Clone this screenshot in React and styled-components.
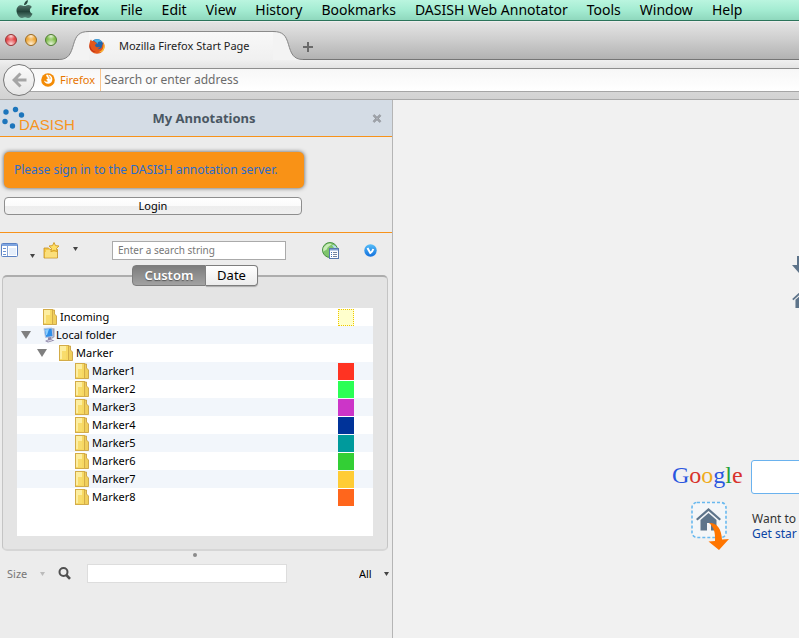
import React from "react";
import styled, { createGlobalStyle, css } from "styled-components";

const Global = createGlobalStyle`
  * { box-sizing: border-box; }
  body { margin: 0; background: #ececec; overflow: hidden; }
  body, button, input, select {
    font-family: "Noto Sans", "Open Sans", sans-serif;
    font-size: 11px;
    color: #000;
  }
  button, input, select { margin: 0; padding: 0; border: 0; background: none; }
  svg { display: block; flex: none; }
`;

const Window = styled.div`
  display: flex;
  flex-direction: column;
  height: 100vh;
`;

/* ---------- system menu ---------- */
const MenuBar = styled.nav`
  flex: none;
  display: flex;
  align-items: center;
  height: 21px;
  padding-left: 16px;
  background: linear-gradient(#baf5df, #a4ecd2 50%, #8fd8bd);
  border-bottom: 1px solid #2c745b;
`;
const MenuItem = styled.button`
  flex: none;
  margin-left: ${(p) => (p.$strong ? 18 : 19)}px;
  margin-right: ${(p) => (p.$strong ? 2 : 0)}px;
  font-size: 14px;
  line-height: 20px;
  font-weight: ${(p) => (p.$strong ? 700 : 400)};
  white-space: nowrap;
`;

/* ---------- tab strip ---------- */
const TabStrip = styled.div`
  flex: none;
  display: flex;
  align-items: flex-end;
  height: 39px;
  background: linear-gradient(#e4e4e4, #cfcfcf 45%, #b2b2b2);
  border-top: 1px solid #eee;
  border-bottom: 1px solid #757575;
`;
const Lights = styled.div`
  display: flex;
  gap: 8px;
  align-self: flex-start;
  padding: 12px 2px 0 5px;
`;
const Light = styled.button`
  width: 12px;
  height: 12px;
  border-radius: 50%;
  border: 1px solid ${(p) => p.$edge};
  background: radial-gradient(circle at 50% 90%, #ffffffcc, transparent 55%),
    radial-gradient(circle at 50% 10%, #fffc, transparent 40%), ${(p) => p.$fill};
`;
const Tab = styled.div`
  display: flex;
  margin-bottom: -1px;
  height: 29px;
`;
const TabFace = styled.div`
  display: flex;
  align-items: center;
  gap: 14px;
  width: 184px;
  padding-bottom: 1px;
  background: linear-gradient(#f8f8f8, #f0f0f0);
  border-top: 1px solid #8b8b8b;
  white-space: nowrap;
  color: #222;
`;
const NewTab = styled.button`
  padding: 0 3px 7px 0;
`;

/* ---------- address bar ---------- */
const NavBar = styled.div`
  flex: none;
  display: flex;
  align-items: center;
  height: 40px;
  padding-left: 3px;
  background: linear-gradient(#f0f0f0, #e4e4e4 20%, #d2d2d2);
  border-bottom: 1px solid #a9a9a9;
`;
const Back = styled.button`
  flex: none;
  display: flex;
  align-items: center;
  justify-content: center;
  width: 32px;
  height: 32px;
  border-radius: 50%;
  border: 1px solid #777;
  background: linear-gradient(#fbfbfb, #e6e6e6);
  z-index: 1;
`;
const UrlBar = styled.label`
  flex: 1;
  display: flex;
  align-items: center;
  height: 24px;
  margin-left: -5px;
  padding-left: 11px;
  background: linear-gradient(#f7f7f7, #fff);
  border-top: 1px solid #8e8e8e;
  border-bottom: 1px solid #a5a5a5;
`;
const Identity = styled.span`
  padding: 0 5px 0 5px;
  border-right: 1px solid #f9c48c;
  line-height: 22px;
  color: #e77600;
`;
const UrlInput = styled.input`
  flex: 1;
  min-width: 0;
  padding-left: 3px;
  font-size: 12px;
  outline: none;
  &::placeholder { color: #6b6b6b; opacity: 1; }
`;

/* ---------- body ---------- */
const Body = styled.div`
  flex: 1;
  display: flex;
  min-height: 0;
`;
const Sidebar = styled.aside`
  flex: none;
  width: 393px;
  background: #ececec;
  border-right: 1px solid #b5b5b5;
`;
const Header = styled.header`
  display: flex;
  align-items: center;
  height: 37px;
  padding-right: 10px;
  background: #d4dce5;
  border-bottom: 1px solid #f7921a;
`;
const Title = styled.h1`
  flex: 1;
  margin: 0;
  padding-right: 42px;
  text-align: center;
  font-size: 13px;
  font-weight: 700;
  color: #4a5763;
`;
const SignIn = styled.section`
  padding: 15px 4px 17px;
  border-bottom: 1px solid #f7921a;
`;
const Notice = styled.p`
  width: 300px;
  margin: 0 0 9px;
  padding: 9px 10px;
  border-radius: 5px;
  background: #f99216;
  box-shadow: 0 0 4px #555;
  font-size: 12px;
  line-height: 18px;
  white-space: nowrap;
  color: #2a6ccc;
`;
const Login = styled.button`
  display: block;
  width: 298px;
  height: 18px;
  border: 1px solid #8e8e8e;
  border-radius: 4px;
  background: linear-gradient(#fff, #fbfbfb 50%, #ededed 50%, #f0f0f0);
  line-height: 16px;
`;
const Tools = styled.div`
  display: flex;
  align-items: center;
  height: 32px;
  padding: 2px 0 0 1px;
`;
const Tool = styled.button`
  display: flex;
  align-items: center;
  margin-left: ${(p) => p.$before || 0}px;
`;
const Low = styled.span`
  align-self: flex-end;
  padding-left: 12px;
  margin-bottom: -1px;
`;
const High = styled.span`
  padding: 0 0 3px 13px;
`;
const Field = styled.input`
  width: ${(p) => p.$w}px;
  height: 19px;
  margin-left: ${(p) => p.$before || 0}px;
  padding: 0 5px;
  border: 1px solid ${(p) => p.$line};
  background: #fff;
  font-size: 10px;
  &::placeholder { color: #777; opacity: 1; }
`;
const Group = styled.section`
  margin: 0 4px 0 2px;
`;
const Frame = styled.div`
  margin-top: -11px;
  padding: 31px 14px 13px;
  border: 1px solid #c4c4c4;
  border-top: 2px solid #adadad;
  border-bottom: 2px solid #d6d6d6;
  border-radius: 5px;
  background: #e4e4e4;
`;
const Tabs = styled.div`
  position: relative;
  z-index: 1;
  display: flex;
  justify-content: center;
`;
const Segment = styled.button`
  height: 21px;
  font-size: 13px;
  line-height: 19px;
  border: 1px solid #7d7d7d;
  ${(p) =>
    p.$on
      ? css`
          width: 74px;
          border-radius: 4px 0 0 4px;
          background: linear-gradient(#7c7c7c, #a2a2a2);
          color: #fff;
          font-weight: 600;
          text-shadow: 0 1px 1px #555;
        `
      : css`
          width: 52px;
          border-left: 0;
          border-radius: 0 4px 4px 0;
          background: linear-gradient(#fff, #ececec);
          box-shadow: 0 1px 1px #aaa;
        `}
`;
const Tree = styled.ul`
  height: 228px;
  margin: 0;
  padding: 0;
  list-style: none;
  background: #fff;
`;
const Row = styled.li`
  display: flex;
  align-items: center;
  height: 18px;
  padding: 0 19px 0 ${(p) => 3 + p.$level * 16}px;
  line-height: 18px;
  &:nth-child(even) { background: #f2f6fb; }
`;
const Twisty = styled.button`
  width: 23px;
  height: 18px;
  padding-left: 1px;
`;
const TwistySpace = styled.span`
  width: 23px;
`;
const Name = styled.span`
  flex: 1;
  padding-left: ${(p) => (p.$tight ? 0 : 3)}px;
`;
const Swatch = styled.span`
  align-self: flex-end;
  width: 16px;
  height: 17px;
  background: ${(p) => p.$fill};
  border: ${(p) => (p.$dotted ? "1px dotted #eec800" : "0")};
`;
const Splitter = styled.div`
  display: flex;
  justify-content: center;
  padding: 2px 2px 0 0;
`;
const Knob = styled.span`
  width: 4px;
  height: 4px;
  border-radius: 50%;
  background: #8b8b8b;
`;
const Filter = styled.div`
  display: flex;
  align-items: center;
  height: 19px;
  margin-top: 7px;
  padding: 0 3px 0 7px;
`;
const Drop = styled.label`
  display: flex;
  align-items: center;
  gap: 12px;
  margin-left: ${(p) => (p.$end ? "auto" : 0)};
`;
const Select = styled.select`
  appearance: none;
  line-height: 18px;
  &:disabled { color: #777; opacity: 1; }
`;
const Search = styled.button`
  margin: 0 16px 0 13px;
`;

/* ---------- start page ---------- */
const StartPage = styled.main`
  flex: 1;
  min-width: 0;
  padding: 156px 0 0 279px;
  background: #f1f1f1;
  overflow: hidden;
`;
const Shortcuts = styled.div`
  display: flex;
  flex-direction: column;
  gap: 16px;
  padding-left: 120px;
`;
const SearchRow = styled.div`
  display: flex;
  align-items: center;
  gap: 8px;
  margin-top: 152px;
`;
const Google = styled.span`
  flex: none;
  width: 71px;
  padding-bottom: 4px;
  font-family: "Liberation Serif", serif;
  font-size: 24px;
  line-height: 30px;
`;
const Letter = styled.span`
  color: ${(p) => p.$c};
`;
const GoogleInput = styled.input`
  flex: none;
  width: 300px;
  height: 34px;
  border: 1px solid #6ab2ee;
  border-radius: 3px;
  background: #fff;
`;
const Tip = styled.div`
  display: flex;
  gap: 21px;
  margin-top: 6px;
  padding-left: 18px;
`;
const TipText = styled.div`
  display: flex;
  flex-direction: column;
  padding-top: 11px;
  font-size: 12px;
  line-height: 15px;
  white-space: nowrap;
  color: #333;
`;
const TipLink = styled.a`
  color: #0b45a5;
  text-decoration: none;
`;

/* ---------- drawings ---------- */
const Arrow = ({ c = "#444", w = 5, h = 4 }) => (
  <svg width={w} height={h} viewBox="0 0 10 8">
    <path d="M0 0H10L5 8Z" fill={c} />
  </svg>
);

const Apple = () => (
  <svg width="17" height="20" viewBox="0 0 17 20">
    <defs>
      <linearGradient id="ap" x1="0" y1="0" x2="0" y2="1">
        <stop offset="0" stopColor="#55776c" />
        <stop offset=".5" stopColor="#23443a" />
        <stop offset="1" stopColor="#5a8879" />
      </linearGradient>
    </defs>
    <path d="M8 5.2C8 2.7 9.600.7 11.900 0C12.200 2.600 10.500 4.900 8 5.200Z" fill="#2c4b41" />
    <path d="M8.600 6.100C9.700 6.100 10.600 5 12.300 5C13.900 5 15.200 5.800 15.900 6.900C12.900 8.700 13.300 12.400 16.500 13.700C15.700 15.900 14.100 18 12.500 18C11.200 18 10.600 17.200 9 17.200C7.400 17.200 6.700 18 5.500 18C3 18 .5 13.900.5 10.500C.5 7.200 2.600 5.200 5 5.200C6.600 5.200 7.600 6.100 8.600 6.100Z" fill="url(#ap)" />
  </svg>
);

const FirefoxLogo = () => (
  <svg width="16" height="16" viewBox="0 0 16 16">
    <circle cx="8" cy="7.500" r="6.500" fill="#2467ad" />
    <path d="M5 2.500C7 .5 11 1 13 4C10 2.500 8 4 9 6Z" fill="#4cb4e8" />
    <path d="M1 3.500C1.300 2.500 1.500 2 2 1.500L3 3.300C4.500 2.700 5.500 3.200 6.200 4.300L8 5C7.600 6 6.500 6.200 6 7C6 9 9 10 10.500 8.800C11 9.500 10 10.800 8.500 11C11.500 12 13.500 9.500 13.200 6L14 7C14.200 5.500 13.800 4 13 3C15 4.500 15.800 6.500 15.500 9C15 13 12 15.700 8 15.700C4 15.700.5 12.800.3 8.500C.2 6.500.5 5 1 3.500Z" fill="#e4571b" />
    <path d="M14 4.800C15.300 8.500 14 13 9.500 14.300C13 14.800 15.600 12 15.600 8.500C15.500 7 15 5.700 14 4.800Z" fill="#fcc234" />
    <path d="M1 6C1 10 3 13 7 14C3 14.500.2 11 .5 8Z" fill="#b92d1a" />
  </svg>
);

const FirefoxMark = () => (
  <svg width="14" height="14" viewBox="0 0 14 14">
    <circle cx="7" cy="7" r="6.800" fill="#f38b05" />
    <path d="M5 2C7 1.500 10 2 11 4.500C12 7.500 10.500 10.500 7.500 10.800C5 11 3.200 9.500 3 7.500C4.200 8.800 6 9 7.200 8C5.800 7.800 5.200 6.800 5.600 6L7.400 5.200L6 4.200Z" fill="#fff" />
    <path d="M7 2.500C8.500 3.200 9.300 4.500 9 6.200" stroke="#f38b05" fill="none" strokeWidth=".8" />
  </svg>
);

const TabEnd = ({ flip }) => (
  <svg width="30" height="29" viewBox="0 0 30 29">
    <g transform={flip ? "translate(30 0) scale(-1 1)" : undefined}>
      <path d="M0 28.500C10 28.500 12 22 14.500 13.500C17 4.500 20 .5 30 .5V29H0Z" fill="#f3f3f3" />
      <path d="M0 28.500C10 28.500 12 22 14.500 13.500C17 4.500 20 .5 30 .5" fill="none" stroke="#858585" />
    </g>
  </svg>
);

const DasishLogo = () => (
  <svg width="78" height="28" viewBox="0 0 78 28">
    <g fill="#1c75bc">
      <circle cx="6" cy="8" r="2.700" />
      <circle cx="15.500" cy="5.500" r="2.700" />
      <circle cx="21.500" cy="11" r="2.700" />
      <circle cx="5" cy="17.500" r="2.700" />
      <circle cx="12.500" cy="22" r="2.700" />
    </g>
    <text x="19" y="26" fontFamily="Liberation Sans, sans-serif" fontSize="15" fill="#f7941d">DASISH</text>
  </svg>
);

const PanelIcon = () => (
  <svg width="17" height="14" viewBox="0 0 17 14">
    <rect x=".5" y=".5" width="16" height="13" rx="1" fill="#fff" stroke="#5b82c4" />
    <path d="M1 1H16V3H1Z" fill="#7fa5e0" />
    <path d="M6.500 3V13" stroke="#8aa7d6" />
    <path d="M2 5.500H5M2 8.500H5M2 11.500H5" stroke="#6c93d2" />
    <rect x="8" y="5" width="7" height="7" fill="#e6effb" />
  </svg>
);

const NewFolderIcon = () => (
  <svg width="17" height="17" viewBox="0 0 17 17">
    <path d="M1 6H5.500L7 7.500H14.500V16H1Z" fill="#f6c944" stroke="#c4912a" strokeWidth=".8" />
    <path d="M2 10H14V15.500H2Z" fill="#fbdf7c" />
    <path d="M3 9H9" stroke="#fff3b8" />
    <path d="M11 .5L12.500 3.600L16 4L13.500 6.400L14.200 9.700L11 8.100L7.900 9.700L8.500 6.400L6 4L9.500 3.600Z" fill="#ffdf66" stroke="#cf9a26" strokeWidth=".9" />
  </svg>
);

const GlobeIcon = () => (
  <svg width="17" height="17" viewBox="0 0 17 17">
    <circle cx="8" cy="8" r="7.500" fill="#7fc46c" stroke="#4a9244" />
    <path d="M2 5C5 1 8 1 10 2C8 4 6 4 5 7C4 9 2 8 1.500 10C1 8 1 6 2 5Z" fill="#c9ecb8" />
    <path d="M10 3C13 2.500 15 5 15 7L12 6Z" fill="#b3ddf0" />
    <rect x="7.500" y="6.500" width="9" height="10" fill="#fff" stroke="#5878ac" />
    <path d="M8 7H16V8.500H8Z" fill="#7f9fd0" />
    <path d="M11 10.500H15M11 12.500H15M11 14.500H15" stroke="#7585a0" />
    <path d="M9 10.500H10M9 12.500H10M9 14.500H10" stroke="#3d6db5" />
  </svg>
);

const CheckIcon = () => (
  <svg width="13" height="13" viewBox="0 0 13 13">
    <defs>
      <linearGradient id="ck" x1="0" y1="0" x2="0" y2="1">
        <stop offset="0" stopColor="#55bdf8" />
        <stop offset="1" stopColor="#1270dd" />
      </linearGradient>
    </defs>
    <circle cx="6.500" cy="6.500" r="6.200" fill="url(#ck)" />
    <path d="M3.500 4L6.300 9C7.500 8.500 8.800 6.500 9.300 5" fill="none" stroke="#fff" strokeWidth="2" />
  </svg>
);

const FolderIcon = () => (
  <svg width="14" height="16" viewBox="0 0 14 16">
    <path d="M9.500 1H11.500V5L13.500 7V15.500H9.500Z" fill="#f0cf5c" stroke="#c59a36" strokeWidth=".8" />
    <rect x=".5" y=".5" width="9" height="15" fill="#f7d964" stroke="#d3ac48" />
    <path d="M1 1H7V14H1Z" fill="#fdeea0" />
    <path d="M3 6H8V14.500H3Z" fill="#f6d75f" opacity=".8" />
  </svg>
);

const ComputerIcon = () => (
  <svg width="13" height="16" viewBox="0 0 13 16">
    <path d="M8 1L11.500 1.500V10L8.500 12Z" fill="#9aa1b8" />
    <path d="M1 1.500L9 1L10 9.500L2.500 10.500Z" fill="#2f8fe8" stroke="#b9c6e2" />
    <path d="M2 2.500L6 2L4 8L3 8Z" fill="#8fd0ff" />
    <path d="M5 10.500L8 10L8.500 12.500L11.500 13.500L5 15.500L2 14L5 12.500Z" fill="#8d86a8" />
    <path d="M4 13.500L8 12.800L9.500 13.600L5 14.800Z" fill="#d5d3e2" />
  </svg>
);

const House = () => (
  <svg width="20" height="18" viewBox="0 0 24 22">
    <path d="M0 11L12 0L24 11L22.500 12.500L12 3L1.500 12.500Z" fill="#5e748a" />
    <path d="M12 5L20 12V22H14.500V15H9.500V22H4V12Z" fill="#5e748a" />
  </svg>
);

const HomeDrag = () => (
  <svg width="41" height="50" viewBox="0 0 41 50">
    <rect x="2" y="2.500" width="34" height="35" rx="5" fill="#f4f6f8" stroke="#69b9ef" strokeWidth="1.600" strokeDasharray="3 2" />
    <g transform="translate(6 8)" fill="#5e748a">
      <path d="M0 11L12.500 0L25 11L23.500 12.500L12.500 3L1.500 12.500Z" />
      <path d="M12.500 5L20.500 12V22.500H15V15H11V22.500H4.500V12Z" />
    </g>
    <path d="M19 23C27 22.500 31.500 29 32 39.500L39 39L29 50L18.500 41.500L25 41C25.500 33 24 27 19 23Z" fill="#ff7500" />
  </svg>
);

const menu = ["File", "Edit", "View", "History", "Bookmarks", "DASISH Web Annotator", "Tools", "Window", "Help"];
const markers = ["#ff3322", "#2bff55", "#cc35c8", "#003399", "#009a9c", "#33cf35", "#ffcc35", "#ff661c"];
const rows = [
  { name: "Incoming", level: 0, fill: "#ffffcc", dotted: true },
  { name: "Local folder", level: 0, open: true, computer: true },
  { name: "Marker", level: 1, open: true },
  ...markers.map((fill, i) => ({ name: `Marker${i + 1}`, level: 2, fill })),
];

export default function App() {
  return (
    <Window>
      <Global />
      <MenuBar>
        <Apple />
        <MenuItem $strong>Firefox</MenuItem>
        {menu.map((m) => (
          <MenuItem key={m}>{m}</MenuItem>
        ))}
      </MenuBar>
      <TabStrip>
        <Lights>
          <Light aria-label="Close" $fill="#e5484a" $edge="#96393b" />
          <Light aria-label="Minimize" $fill="#f0a93a" $edge="#9a6c28" />
          <Light aria-label="Zoom" $fill="#83bf4e" $edge="#517d38" />
        </Lights>
        <Tab>
          <TabEnd />
          <TabFace>
            <FirefoxLogo />
            Mozilla Firefox Start Page
          </TabFace>
          <TabEnd flip />
        </Tab>
        <NewTab aria-label="New tab">
          <svg width="10" height="10" viewBox="0 0 10 10">
            <path d="M5 0V10M0 5H10" stroke="#6a6a6a" strokeWidth="2" />
          </svg>
        </NewTab>
      </TabStrip>
      <NavBar>
        <Back aria-label="Back">
          <svg width="15" height="16" viewBox="0 0 15 16">
            <path d="M8.500 1.500L2 8L8.500 14.500M2.500 8H14.500" fill="none" stroke="#a5a5a5" strokeWidth="3" />
          </svg>
        </Back>
        <UrlBar>
          <FirefoxMark />
          <Identity>Firefox</Identity>
          <UrlInput placeholder="Search or enter address" aria-label="Address" />
        </UrlBar>
      </NavBar>
      <Body>
        <Sidebar>
          <Header>
            <DasishLogo />
            <Title>My Annotations</Title>
            <button aria-label="Close sidebar">
              <svg width="10" height="9" viewBox="0 0 10 9">
                <path d="M1.500 1L8.500 8M8.500 1L1.500 8" stroke="#85898e" strokeWidth="2.400" />
                <path d="M1.500 1L8.500 8M8.500 1L1.500 8" stroke="#c3c8cf" strokeWidth=".8" />
              </svg>
            </button>
          </Header>
          <SignIn>
            <Notice>Please sign in to the DASISH annotation server.</Notice>
            <Login>Login</Login>
          </SignIn>
          <Tools>
            <Tool aria-label="Panels">
              <PanelIcon />
              <Low><Arrow /></Low>
            </Tool>
            <Tool $before={8} aria-label="New folder">
              <NewFolderIcon />
              <High><Arrow /></High>
            </Tool>
            <Field $w={174} $before={34} $line="#aaa" placeholder="Enter a search string" aria-label="Search annotations" />
            <Tool $before={36} aria-label="Web list">
              <GlobeIcon />
            </Tool>
            <Tool $before={25} aria-label="Verify">
              <CheckIcon />
            </Tool>
          </Tools>
          <Group>
            <Tabs>
              <Segment $on>Custom</Segment>
              <Segment>Date</Segment>
            </Tabs>
            <Frame>
              <Tree>
                {rows.map((r) => (
                  <Row key={r.name} $level={r.level}>
                    {r.open ? (
                      <Twisty aria-label={`Collapse ${r.name}`}>
                        <Arrow c="#7f7f7f" w={10} h={8} />
                      </Twisty>
                    ) : (
                      <TwistySpace />
                    )}
                    {r.computer ? <ComputerIcon /> : <FolderIcon />}
                    <Name $tight={r.computer}>{r.name}</Name>
                    {r.fill && <Swatch $fill={r.fill} $dotted={r.dotted} />}
                  </Row>
                ))}
              </Tree>
            </Frame>
          </Group>
          <Splitter>
            <Knob />
          </Splitter>
          <Filter>
            <Drop>
              <Select disabled aria-label="Size">
                <option>Size</option>
              </Select>
              <Arrow c="#bbb" />
            </Drop>
            <Search aria-label="Search">
              <svg width="13" height="13" viewBox="0 0 13 13">
                <circle cx="5.500" cy="5" r="4" fill="none" stroke="#505050" strokeWidth="2" />
                <path d="M8.300 8L12 11.800" stroke="#505050" strokeWidth="2.600" />
              </svg>
            </Search>
            <Field $w={200} $line="#ddd" aria-label="Filter" />
            <Drop $end>
              <Select aria-label="Scope">
                <option>All</option>
              </Select>
              <Arrow />
            </Drop>
          </Filter>
        </Sidebar>
        <StartPage>
          <Shortcuts>
            <svg width="16" height="18" viewBox="0 0 16 18">
              <path d="M5 0H11V9H16L8 18L0 9H5Z" fill="#5e748a" />
            </svg>
            <House />
          </Shortcuts>
          <SearchRow>
            <Google>
              <Letter $c="#2a56df">G</Letter>
              <Letter $c="#d8332b">o</Letter>
              <Letter $c="#f0ab1c">o</Letter>
              <Letter $c="#2a56df">g</Letter>
              <Letter $c="#24a03a">l</Letter>
              <Letter $c="#d8332b">e</Letter>
            </Google>
            <GoogleInput aria-label="Google search" />
          </SearchRow>
          <Tip>
            <HomeDrag />
            <TipText>
              <span>Want to</span>
              <TipLink href="#start">Get star</TipLink>
            </TipText>
          </Tip>
        </StartPage>
      </Body>
    </Window>
  );
}
